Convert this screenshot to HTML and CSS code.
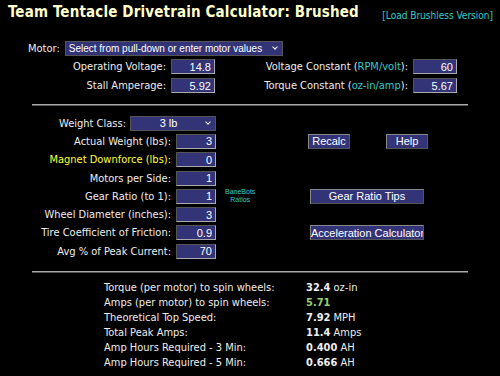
FILE: index.html
```html
<!DOCTYPE html>
<html lang="en">
<head>
    <meta charset="UTF-8">
    <title>Team Tentacle Drivetrain Calculator: Brushed</title>
    <link rel="stylesheet" href="styles.css">
</head>
<body>
<!--header-->
<div class="header">
    <h1>Team Tentacle Drivetrain Calculator: Brushed</h1>
    <a class="swap" href="#">[Load Brushless Version]</a>
</div>

<!--motor values-->
<div class="motorRow">
    <span class="lbl">Motor:</span>
    <span class="selWrap">
        <select class="motorSel">
            <option>Select from pull-down or enter motor values</option>
        </select>
    </span>
</div>
<div class="motorGrid">
    <span class="lbl">Operating Voltage:</span>
    <input class="num" type="text" value="14.8">
    <span class="lbl">Voltage Constant (<span class="unit">RPM/volt</span>):</span>
    <input class="num" type="text" value="60">
    <span class="lbl">Stall Amperage:</span>
    <input class="num" type="text" value="5.92">
    <span class="lbl">Torque Constant (<span class="unit">oz-in/amp</span>):</span>
    <input class="num" type="text" value="5.67">
</div>

<hr class="rule">

<!--robot values-->
<div class="robotGrid">
    <div class="field r1"><span class="lbl">Weight Class:</span>
        <span class="selWrap"><select class="wcSel"><option>3 lb</option></select></span></div>
    <div class="field r2"><span class="lbl">Actual Weight (lbs):</span>
        <input class="num" type="text" value="3"></div>
    <div class="field r3"><span class="lbl magnet">Magnet Downforce (lbs):</span>
        <input class="num" type="text" value="0"></div>
    <div class="field r4"><span class="lbl">Motors per Side:</span>
        <input class="num" type="text" value="1"></div>
    <div class="field r5"><span class="lbl">Gear Ratio (to 1):</span>
        <input class="num" type="text" value="1"></div>
    <div class="field r6"><span class="lbl">Wheel Diameter (inches):</span>
        <input class="num" type="text" value="3"></div>
    <div class="field r7"><span class="lbl">Tire Coefficient of Friction:</span>
        <input class="num" type="text" value="0.9"></div>
    <div class="field r8"><span class="lbl">Avg % of Peak Current:</span>
        <input class="num" type="text" value="70"></div>

    <a class="bane" href="#">BaneBots<br>Ratios</a>

    <div class="btnPair">
        <input class="btn small" type="button" value="Recalc">
        <input class="btn small" type="button" value="Help">
    </div>
    <input class="btn wide tips" type="button" value="Gear Ratio Tips">
    <input class="btn wide accel" type="button" value="Acceleration Calculator">
</div>

<hr class="rule">

<!--results-->
<div class="results">
    <span>Torque (per motor) to spin wheels:</span><span><b>32.4</b> oz-in</span>
    <span>Amps (per motor) to spin wheels:</span><span><b class="ok">5.71</b></span>
    <span>Theoretical Top Speed:</span><span><b>7.92</b> MPH</span>
    <span>Total Peak Amps:</span><span><b>11.4</b> Amps</span>
    <span>Amp Hours Required - 3 Min:</span><span><b>0.400</b> AH</span>
    <span>Amp Hours Required - 5 Min:</span><span><b>0.666</b> AH</span>
</div>
</body>
</html>
```

FILE: styles.css
```css
body{
    margin: 0;
    background-color: #000;
    color: #eee;
    font-family: "DejaVu Sans Condensed", "DejaVu Sans", sans-serif;
    font-size: 11px;
}
.header{
    display: flex;
    justify-content: space-between;
    align-items: flex-end;
    padding: 0 7px 0 8px;
    height: 22px;
    white-space: nowrap;
}
h1{
    margin: 0;
    font-family: "DejaVu Sans Condensed", "DejaVu Sans", sans-serif;
    font-weight: bold;
    font-size: 15px;
    letter-spacing: 0.15px;
    color: #ffffcc;
    line-height: 19px;
}
.swap{
    color: #33cccc;
    text-decoration: none;
    font-family: "DejaVu Sans Condensed", sans-serif;
    font-size: 10px;
    margin-bottom: 1px;
}
.lbl{
    color: #eee;
    white-space: nowrap;
}
.unit{ color: #33cccc; }
.magnet{ color: #ffff33; }

input, select{
    font-family: "Liberation Sans", Arial, sans-serif;
    font-size: 11px;
    color: #fff;
    background-color: #333377;
    box-sizing: border-box;
    margin: 0;
}
.num{
    width: 44px;
    height: 15px;
    text-align: right;
    padding: 0 3px;
    border: 1px solid;
    border-color: #555 #aaa #aaa #555;
}
select{
    display: block;
    height: 15px;
    padding: 0 0 0 3px;
    border: 1px solid #555;
    border-radius: 0;
    appearance: none;
}
.selWrap{
    position: relative;
    display: block;
}
.selWrap::after{
    content: "";
    position: absolute;
    right: 6px;
    top: 4px;
    width: 3px;
    height: 3px;
    border-right: 1px solid #fff;
    border-bottom: 1px solid #fff;
    transform: rotate(45deg);
    pointer-events: none;
}

/* motor */
.motorRow{
    display: flex;
    align-items: center;
    gap: 5px;
    padding: 19px 0 0 28px;
}
.motorSel{ width: 218px; font-size: 10px; }
.motorGrid{
    display: grid;
    grid-template-columns: 166px 44px 188px 44px;
    column-gap: 5px;
    row-gap: 4px;
    align-items: center;
    margin-top: 3px;
}
.motorGrid .lbl{ text-align: right; }

.rule{
    margin: 11px 32px 0 32px;
    height: 0;
    border: 0;
    border-top: 1px solid #aaa;
    border-bottom: 1px solid #555;
}

/* robot */
.robotGrid{
    display: grid;
    grid-template-columns: 216px 92px auto;
    grid-template-rows: repeat(8, 18.3px);
    margin: 8px 0 6px 0;
    align-items: center;
}
.field{
    grid-column: 1;
    display: flex;
    justify-content: flex-end;
    align-items: center;
    gap: 5px;
}
.r1{ grid-row: 1; gap: 4px; }
.r2{ grid-row: 2; }
.r3{ grid-row: 3; }
.r4{ grid-row: 4; }
.r5{ grid-row: 5; }
.r6{ grid-row: 6; }
.r7{ grid-row: 7; }
.r8{ grid-row: 8; }
.field .num{ width: 40px; }
.wcSel{ width: 86px; text-align: center; text-align-last: center; padding-right: 12px; }
.bane{
    grid-column: 2;
    grid-row: 5;
    justify-self: start;
    margin-left: 9px;
    color: #33cccc;
    text-decoration: none;
    font-family: "Liberation Sans", sans-serif;
    font-size: 7px;
    line-height: 8px;
    text-align: center;
}
.btn{
    font-family: "Liberation Sans", Arial, sans-serif;
    font-size: 11px;
    height: 15px;
    padding: 0;
    border: 1px solid;
    border-color: #888 #555 #555 #888;
    background-color: #333377;
    color: #fff;
}
.btnPair{
    grid-column: 3;
    grid-row: 2;
    display: flex;
    gap: 36px;
}
.small{ width: 42px; }
.wide{ width: 114px; margin-left: 2px; justify-self: start; }
.tips{ grid-column: 3; grid-row: 5; }
.accel{ grid-column: 3; grid-row: 7; }

/* results */
.results{
    display: grid;
    grid-template-columns: 202px auto;
    grid-auto-rows: 15px;
    align-items: center;
    padding: 7px 0 0 104px;
    font-family: "DejaVu Sans Condensed", sans-serif;
    font-size: 11px;
}
.results b{ font-weight: bold; }
.results .ok{ color: #99cc66; }
```
